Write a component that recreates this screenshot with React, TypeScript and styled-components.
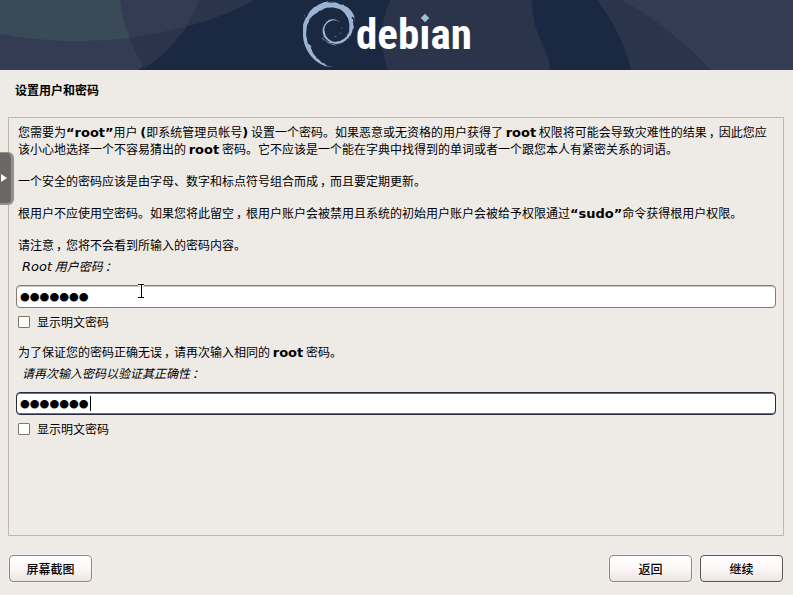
import React from "react";
import styled, { createGlobalStyle } from "styled-components";
import { SiDebian } from "react-icons/si";

const GlobalStyle = createGlobalStyle`
  *, *::before, *::after { box-sizing: border-box; }
  body {
    margin: 0;
    background: #eeebe7;
    color: #000;
    font: 12px/17px "Noto Sans CJK SC", sans-serif;
  }
`;

const Page = styled.div`
  position: relative;
  display: flex;
  flex-direction: column;
  min-height: 100vh;
`;

const Banner = styled.header`
  position: relative;
  display: flex;
  justify-content: center;
  height: 70px;
  padding-right: 18px;
  overflow: hidden;
  background: #1a2842;
`;

const BannerArt = styled.svg`
  position: absolute;
  inset: 0;
  width: 100%;
  height: 100%;
`;

const Logo = styled.div`
  position: relative;
  display: flex;
  gap: 1px;
  color: #fff;
`;

const Swirl = styled(SiDebian)`
  width: 52px;
  height: 66px;
  margin-top: 1px;
  color: #9cb3d3;
`;

const Wordmark = styled.span`
  font: bold 43px/68px "Roboto Condensed", "DejaVu Sans Condensed", Lato, sans-serif;
`;

const DotlessI = styled.span`
  position: relative;
`;

const Diamond = styled.span`
  position: absolute;
  left: 50%;
  top: 6px;
  width: 6px;
  height: 6px;
  margin-left: -3px;
  background: #9cc0d8;
  transform: rotate(45deg);
`;

const Title = styled.h1`
  margin: 11px 15px 19px;
  font-size: 12px;
  line-height: 17px;
  font-weight: bold;
`;

const Panel = styled.main`
  display: flex;
  flex: 1;
  flex-direction: column;
  margin: 0 9px 0 8px;
  padding: 5px 7px;
  border: 1px solid #c4b8aa;
`;

const Copy = styled.div`
  display: flex;
  flex-direction: column;
  gap: 15px;
  padding: 0 2px;
`;

const Paragraph = styled.p`
  margin: 0;
`;

const Latin = styled.strong`
  font: bold 13px/1px "DejaVu Sans", sans-serif;
`;

const MarkCell = styled.span`
  display: inline-block;
  width: 12px;
  text-indent: 2px;
`;

const Field = styled.div`
  display: flex;
  flex-direction: column;
  margin: 4px 0 13px;
`;

const FieldLabel = styled.label`
  padding-left: 6px;
  margin-bottom: 11px;
  font-style: italic;
`;

const LabelLatin = styled.span`
  font: italic 13px/1px "DejaVu Sans", sans-serif;
`;

const InputWrap = styled.div`
  position: relative;
  display: flex;
`;

const PasswordInput = styled.input<{ $active?: boolean }>`
  flex: 1;
  min-width: 0;
  height: 23px;
  padding: 1px 3px 0;
  border: 1px solid ${(p) => (p.$active ? "#272c42" : "#8a7a6a")};
  border-radius: 4px;
  outline: none;
  background: #fff;
  box-shadow: ${(p) => (p.$active ? "inset 0 1px 0 #6c7080, inset 0 -1px 0 #6c7080" : "inset 0 1px 0 #cfc8c0")};
  color: #000;
  font: 28px/20px "Liberation Sans", sans-serif;
  -webkit-text-stroke: 1px #000;
`;

const Caret = styled.span`
  position: absolute;
  left: 74px;
  top: 4px;
  width: 1px;
  height: 15px;
  background: #000;
`;

const Pointer = styled.svg`
  position: absolute;
  left: 120px;
  top: -2px;
  width: 10px;
  height: 16px;
`;

const CheckLabel = styled.label`
  display: flex;
  align-items: center;
  align-self: flex-start;
  gap: 7px;
  margin-top: 5px;
  padding-left: 2px;
`;

const CheckBox = styled.input`
  appearance: none;
  width: 12px;
  height: 12px;
  margin: 0;
  border: 1px solid #857567;
  border-radius: 1px;
  background: #fff;
  &:checked { background: #272c42; }
`;

const Footer = styled.footer`
  display: flex;
  gap: 8px;
  padding: 19px 10px 13px 9px;
`;

const Button = styled.button<{ $primary?: boolean; $push?: boolean }>`
  width: 83px;
  height: 27px;
  padding: 0;
  margin-left: ${(p) => (p.$push ? "auto" : "0")};
  border: 1px solid ${(p) => (p.$primary ? "#5d534b" : "#93867a")};
  border-radius: 4px;
  background: linear-gradient(#fff, #fbf7f6 50%, #ece5e3);
  box-shadow: 0 0 1px 1px #f4f1ee;
  color: #000;
  font: 500 12px/17px "Noto Sans CJK SC", sans-serif;
`;

const SideTab = styled.button`
  position: absolute;
  left: 0;
  top: 152px;
  display: flex;
  align-items: center;
  width: 14px;
  height: 53px;
  padding: 0;
  border: solid #93918f;
  border-width: 1px 3px 2px 0;
  border-radius: 0 6px 6px 0;
  background: #696867;
`;

const Arrow = styled.svg`
  width: 7px;
  height: 8px;
`;

const Comma = () => <MarkCell>，</MarkCell>;
const Colon = () => <MarkCell>：</MarkCell>;

function BannerBackground() {
  return (
    <BannerArt viewBox="0 0 793 70" preserveAspectRatio="xMidYMid slice" aria-hidden="true">
      <path fill="#333c53" d="M0 0H200C190 29 168 52 138 70H0Z" />
      <path fill="#2a344b" d="M200 0H255C232 12 210 21 185 27Q195 13 200 0Z" />
      <path fill="#2a344b" d="M130 38Q158 34 185 27C174 45 162 56 145 68L146 70Q136 56 130 38Z" />
      <path fill="#3b4a59" d="M0 0H120Q122 20 130 38Q65 46 0 34Z" />
      <path fill="#2a344b" d="M390 0Q375 35 388 70H550C549 47 532 36 532 0Z" />
      <path fill="#2a344b" d="M597 0Q622 33 631 70H793V0Z" />
      <path fill="#333c53" d="M622 0Q670 27 711 70H793V0Z" />
    </BannerArt>
  );
}

function ShowPassword({ id }: { id: string }) {
  return (
    <CheckLabel htmlFor={id}>
      <CheckBox id={id} type="checkbox" />
      显示明文密码
    </CheckLabel>
  );
}

export default function App() {
  return (
    <Page>
      <GlobalStyle />
      <Banner>
        <BannerBackground />
        <Logo role="img" aria-label="debian">
          <Swirl preserveAspectRatio="xMidYMid slice" />
          <Wordmark>
            deb<DotlessI>ı<Diamond /></DotlessI>an
          </Wordmark>
        </Logo>
      </Banner>
      <Title>设置用户和密码</Title>
      <Panel>
        <Copy>
          <Paragraph>
            您需要为<Latin>“root”</Latin>用户 <Latin>(</Latin>即系统管理员帐号<Latin>)</Latin>{" "}
            设置一个密码。如果恶意或无资格的用户获得了 <Latin>root</Latin>{" "}
            权限将可能会导致灾难性的结果<Comma />因此您应该小心地选择一个不容易猜出的 <Latin>root</Latin>{" "}
            密码。它不应该是一个能在字典中找得到的单词或者一个跟您本人有紧密关系的词语。
          </Paragraph>
          <Paragraph>一个安全的密码应该是由字母、数字和标点符号组合而成<Comma />而且要定期更新。</Paragraph>
          <Paragraph>
            根用户不应使用空密码。如果您将此留空<Comma />根用户账户会被禁用且系统的初始用户账户会被给予权限通过<Latin>“sudo”</Latin>命令获得根用户权限。
          </Paragraph>
          <Paragraph>请注意<Comma />您将不会看到所输入的密码内容。</Paragraph>
        </Copy>
        <Field>
          <FieldLabel htmlFor="password">
            <LabelLatin>Root</LabelLatin> 用户密码<Colon />
          </FieldLabel>
          <InputWrap>
            <PasswordInput id="password" type="password" defaultValue="debian1" />
            <Pointer viewBox="0 0 10 16" aria-hidden="true">
              <path d="M2 1.5H8M5.5 2V14M2 14.5H8" fill="none" stroke="#fff" strokeWidth="3" />
              <path d="M2 1.5H8M5.5 2V14M2 14.5H8" fill="none" stroke="#000" />
            </Pointer>
          </InputWrap>
          <ShowPassword id="show-password" />
        </Field>
        <Copy>
          <Paragraph>
            为了保证您的密码正确无误<Comma />请再次输入相同的 <Latin>root</Latin> 密码。
          </Paragraph>
        </Copy>
        <Field>
          <FieldLabel htmlFor="confirm">请再次输入密码以验证其正确性<Colon /></FieldLabel>
          <InputWrap>
            <PasswordInput id="confirm" type="password" defaultValue="debian1" $active />
            <Caret />
          </InputWrap>
          <ShowPassword id="show-confirm" />
        </Field>
      </Panel>
      <Footer>
        <Button type="button">屏幕截图</Button>
        <Button type="button" $push>返回</Button>
        <Button type="button" $primary>继续</Button>
      </Footer>
      <SideTab type="button" aria-label="展开">
        <Arrow viewBox="0 0 7 8"><path d="M1 0L7 4L1 8Z" fill="#fff" /></Arrow>
      </SideTab>
    </Page>
  );
}
